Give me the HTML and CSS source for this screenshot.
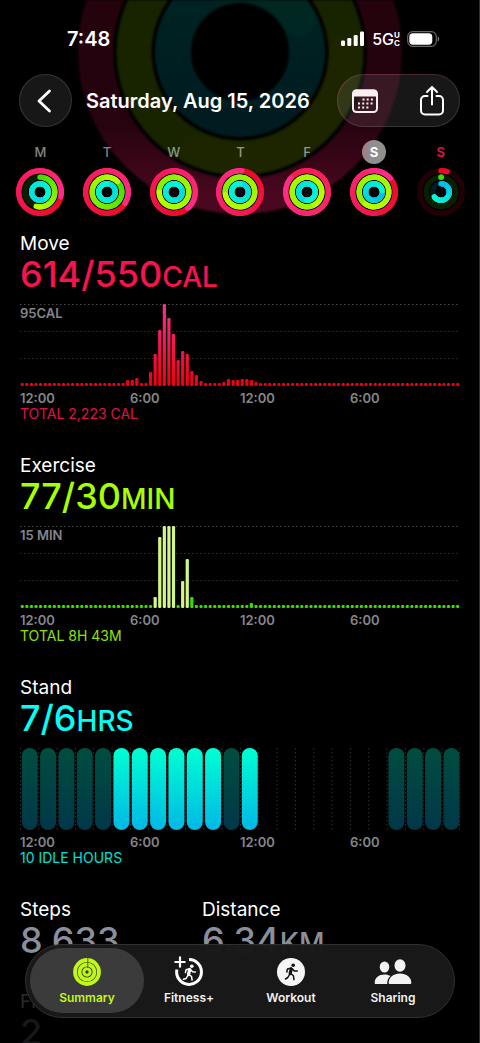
FILE: index.html
```html
<!DOCTYPE html>
<html lang="en">
<head>
<meta charset="utf-8">
<meta name="viewport" content="width=device-width, initial-scale=1">
<title>Activity Summary</title>
<link rel="stylesheet" href="styles.css">
</head>
<body>
<div class="app">
  <svg class="backdrop" width="340" height="224" viewBox="0 0 340 224" aria-hidden="true">
    <defs>
      <linearGradient id="bd-red" x1="0" y1="0" x2="0" y2="1">
        <stop offset="0" stop-color="#24030c"/><stop offset=".75" stop-color="#26030f"/><stop offset="1" stop-color="#4a0820"/>
      </linearGradient>
      <linearGradient id="bd-cyan" x1="0" y1="0" x2="0" y2="1">
        <stop offset="0" stop-color="#002422"/><stop offset="1" stop-color="#001c21"/>
      </linearGradient>
    </defs>
    <g fill="none">
      <circle cx="170" cy="52" r="144.500" stroke="url(#bd-red)" stroke-width="35"/>
      <circle cx="170" cy="52" r="106" stroke="#182300" stroke-width="35"/>
      <path d="M127 149A106 106 0 0 0 276 52" stroke="#1c2500" stroke-width="33" stroke-linecap="round"/>
      <circle cx="170" cy="52" r="67" stroke="url(#bd-cyan)" stroke-width="36"/>
      <path d="M160 -14A67 67 0 0 1 229 19" stroke="#002721" stroke-width="34" stroke-linecap="round"/>
    </g>
  </svg>

  <header class="top">
    <div class="status">
      <time class="clock">7:48</time>
      <div class="signals">
        <svg width="24" height="16" viewBox="0 0 24 16" fill="#fff" aria-label="Signal">
          <rect x="0" y="9.500" width="4" height="5.500" rx="1.200"/><rect x="6.300" y="7" width="4" height="8" rx="1.200"/><rect x="12.700" y="4" width="4" height="11" rx="1.200"/><rect x="19" y="0.500" width="4" height="14.500" rx="1.200"/>
        </svg>
        <span class="carrier">5G<span class="uc"><span>U</span><span>C</span></span></span>
        <svg width="33" height="16" viewBox="0 0 33 16" aria-label="Battery">
          <rect x=".7" y=".7" width="28.600" height="14.600" rx="5" fill="none" stroke="#6b6669" stroke-width="1.200"/>
          <rect x="2.300" y="2.300" width="23" height="11.400" rx="3.600" fill="#fff"/>
          <path d="M30.700 5.500c2 .6 2 4.400 0 5z" fill="#77777a"/>
        </svg>
      </div>
    </div>
    <div class="titlebar">
      <button class="glass back" type="button" aria-label="Back">
        <svg width="26" height="26" viewBox="0 0 26 26" fill="none" stroke="#fff" stroke-width="2.800" stroke-linecap="round" stroke-linejoin="round"><path d="M16.500 3 6 13l10.500 10"/></svg>
      </button>
      <h1 class="title">Saturday, Aug 15, 2026</h1>
      <div class="glass actions">
        <button type="button" aria-label="Calendar">
          <svg width="28" height="28" viewBox="0 0 28 28">
            <rect x="2" y="3.500" width="24" height="21.500" rx="3.500" fill="none" stroke="#fdeef2" stroke-width="2"/>
            <path d="M1.500 9.500V6A3.500 3.500 0 0 1 5 2.500h18A3.500 3.500 0 0 1 26.500 6v3.500z" fill="#fdeef2"/>
            <path d="M11.500 12.500h11M7 16.500h15.500M7 20.500h11" stroke="#fdeef2" stroke-width="2" stroke-dasharray="2 2.200"/>
          </svg>
        </button>
        <button type="button" aria-label="Share">
          <svg width="28" height="32" viewBox="0 0 28 32" fill="none" stroke="#fff" stroke-width="2" stroke-linecap="round" stroke-linejoin="round">
            <path d="M9.500 11H7a4 4 0 0 0-4 4v10.500a4 4 0 0 0 4 4h14a4 4 0 0 0 4-4V15a4 4 0 0 0-4-4h-2.500M14 19.500V2.500M9 7l5-5 5 5"/>
          </svg>
        </button>
      </div>
    </div>
    <div class="week" id="week"></div>
  </header>

  <main class="content">
    <section class="metric move">
      <h2>Move</h2>
      <p class="value">614/550<small>CAL</small></p>
      <div class="chart">
        <span class="scale">95CAL</span>
        <svg class="plot" id="move-plot" width="100%" height="82">
          <defs><linearGradient id="move-fill" gradientUnits="userSpaceOnUse" x1="0" y1="0" x2="0" y2="82"><stop offset="0" stop-color="#ff2f92"/><stop offset=".5" stop-color="#f5164f"/><stop offset="1" stop-color="#ea0010"/></linearGradient></defs>
        </svg>
      </div>
      <div class="axis"><span>12:00</span><span>6:00</span><span>12:00</span><span>6:00</span></div>
      <p class="total">TOTAL 2,223 CAL</p>
    </section>

    <section class="metric exercise">
      <h2>Exercise</h2>
      <p class="value">77/30<small>MIN</small></p>
      <div class="chart">
        <span class="scale">15 MIN</span>
        <svg class="plot" id="exercise-plot" width="100%" height="82"></svg>
      </div>
      <div class="axis"><span>12:00</span><span>6:00</span><span>12:00</span><span>6:00</span></div>
      <p class="total">TOTAL 8H 43M</p>
    </section>

    <section class="metric stand">
      <h2>Stand</h2>
      <p class="value">7/6<small>HRS</small></p>
      <div class="chart">
        <svg class="plot" id="stand-plot" width="100%" height="82">
          <defs>
            <linearGradient id="stand-on" x1="0" y1="0" x2="0" y2="1"><stop offset="0" stop-color="#00ffd2"/><stop offset="1" stop-color="#00b8e6"/></linearGradient>
            <linearGradient id="stand-off" x1="0" y1="0" x2="0" y2="1"><stop offset="0" stop-color="#004d3f"/><stop offset="1" stop-color="#003748"/></linearGradient>
          </defs>
        </svg>
      </div>
      <div class="axis"><span>12:00</span><span>6:00</span><span>12:00</span><span>6:00</span></div>
      <p class="total">10 IDLE HOURS</p>
    </section>

    <section class="stats">
      <div class="metric"><h2>Steps</h2><p class="value">8,633</p></div>
      <div class="metric"><h2>Distance</h2><p class="value">6.34<small>KM</small></p></div>
      <div class="metric"><h2>Flights Climbed</h2><p class="value">2</p></div>
    </section>
  </main>

  <div class="fade"></div>
  <nav class="tabs">
    <button class="tab active" type="button">
      <svg width="28" height="28" viewBox="0 0 28 28" fill="none" stroke="#c1f818" stroke-width="3.800">
        <circle cx="14" cy="14" r="12"/><circle cx="14" cy="14" r="7.500"/><circle cx="14" cy="14" r="3.200" stroke-width="3"/>
        <path d="M14.800 0v10" stroke="#3b3b3b" stroke-width=".8"/>
      </svg>
      <span>Summary</span>
    </button>
    <button class="tab" type="button">
      <svg width="28" height="28" viewBox="2 2 28 28" fill="none" stroke="#fff" stroke-linecap="round" stroke-linejoin="round">
        <path d="M16 3.600A12.400 12.400 0 1 1 3.900 13.500" stroke-width="3" stroke-linecap="butt"/>
        <path d="M7 1.300v9.400M2.300 6h9.400" stroke-width="2.200"/>
        <circle cx="18.800" cy="10.300" r="1.800" fill="#fff" stroke="none"/>
        <path d="M16.800 13.500l-1.300 5" stroke-width="3.200"/>
        <path d="M16.800 12.700l-3.700 1-.7 2.800M17.800 14l1.800 1.800 2.800.2M16.100 18.500l2.400 2 .6 3.500M14.800 19.500l-1.700 3-2.600.8" stroke-width="1.500"/>
      </svg>
      <span>Fitness+</span>
    </button>
    <button class="tab" type="button">
      <svg width="28" height="28" viewBox="0 0 28 28" fill="none" stroke="#111" stroke-linecap="round" stroke-linejoin="round">
        <circle cx="14" cy="14" r="14" fill="#f5f5f5" stroke="none"/>
        <circle cx="16.200" cy="7.300" r="1.800" fill="#111" stroke="none"/>
        <path d="M14.300 11l-1.200 4.500" stroke-width="3.200"/>
        <path d="M14.300 10l-3.800 1-.7 3M15.500 11l1.800 1.900 3 .1M13.800 15.500l2.600 2.200.6 4M12.500 16.500l-1.700 3-2.300 1.500" stroke-width="1.500"/>
      </svg>
      <span>Workout</span>
    </button>
    <button class="tab" type="button">
      <svg width="38" height="26" viewBox="0 0 38 26" fill="#f2f2f2">
        <ellipse cx="10.500" cy="8" rx="4.800" ry="5.600"/><ellipse cx="26" cy="6.500" rx="5.500" ry="6.200"/>
        <path d="M.7 24C.7 18.500 5 15.500 10.500 15.500c2.500 0 4.500.6 6 1.600-2.200 1.900-3.300 4.200-3.300 7.900H1.900C1 25 .7 24.700.7 24z"/>
        <path d="M14.700 23.800c0-5.600 5-9.300 11.300-9.300s11.300 3.700 11.300 9.300c0 .8-.4 1.200-1.200 1.200H15.900c-.8 0-1.200-.4-1.200-1.200z"/>
      </svg>
      <span>Sharing</span>
    </button>
  </nav>
</div>
<script src="app.js"></script>
</body>
</html>
```
FILE: styles.css
```css
* { box-sizing: border-box; }

body {
  margin: 0;
  background: #000;
  color: #fff;
  font-family: Inter, "Liberation Sans", sans-serif;
}

h1, h2, p { margin: 0; }

button {
  padding: 0;
  border: 0;
  background: none;
  color: inherit;
  font: inherit;
}

svg { display: block; flex: none; }

.app {
  position: relative;
  height: 100vh;
  overflow: hidden;
  border-right: 1px solid #303030;
}

.backdrop {
  position: absolute;
  top: 0;
  left: 50%;
  transform: translateX(-50%);
  filter: blur(1px);
}

.top, .content { position: relative; }

.status {
  display: flex;
  justify-content: space-between;
  align-items: center;
  height: 74px;
  padding: 4px 39px 0 67px;
}

.clock { font-size: 20px; font-weight: 600; }

.signals { display: flex; align-items: center; gap: 7px; }

.carrier {
  display: flex;
  align-items: center;
  font-size: 16px;
  font-weight: 500;
}

.uc {
  display: grid;
  font-size: 8px;
  line-height: 8px;
  font-weight: 700;
}

.titlebar {
  display: flex;
  align-items: center;
  gap: 14px;
  padding: 0 19px;
}

.glass {
  height: 53px;
  border: 1px solid rgba(255, 255, 255, .13);
  border-radius: 27px;
  background: rgba(255, 255, 255, .09);
}

.back {
  display: grid;
  place-items: center;
  width: 53px;
}

.title {
  flex: 1;
  font-size: 20px;
  font-weight: 600;
  line-height: 24px;
  white-space: nowrap;
}

.actions {
  display: flex;
  justify-content: space-between;
  align-items: center;
  width: 123px;
  padding: 0 13px;
  border-color: rgba(255, 120, 140, .2) rgba(255, 255, 255, .13) rgba(255, 255, 255, .13) rgba(255, 60, 90, .35);
}

.week {
  display: grid;
  grid-template-columns: repeat(7, 1fr);
  padding: 13px 5px 0 7px;
}

.day {
  display: grid;
  justify-items: center;
  gap: 4px;
}

.day-name {
  width: 24px;
  border-radius: 12px;
  color: rgba(255, 255, 255, .53);
  font-size: 13px;
  font-weight: 500;
  line-height: 24px;
  text-align: center;
}

.day-name.selected {
  background: linear-gradient(100deg, #a37b83, #8f8f8f 45%);
  color: #fff;
  font-weight: 700;
}

.day-name.today { color: #e5124f; font-weight: 600; }

.content { padding: 16px 19px 0 20px; }

.metric h2 {
  font-size: 19px;
  font-weight: 400;
  line-height: 24px;
}

.value {
  font-size: 36px;
  font-weight: 500;
  line-height: 36px;
}

.value small { font-size: 28px; line-height: 0; }

.chart { position: relative; margin-top: 12px; }

.scale {
  position: absolute;
  top: 1px;
  left: 0;
  color: #85858a;
  font-size: 13px;
  font-weight: 600;
  line-height: 16px;
}

.axis {
  display: grid;
  grid-template-columns: repeat(4, 1fr);
  margin-top: 4px;
  color: #85858a;
  font-size: 13px;
  font-weight: 600;
  line-height: 16px;
}

.total {
  margin-bottom: 32px;
  font-size: 14px;
  line-height: 16px;
}

.move .value { color: #fa114f; }
.move .total { color: #e01048; }
.exercise .value { color: #a6ff00; }
.exercise .total { color: #92e000; }
.stand .value { color: #00fff6; }
.stand .total { color: #00e0d4; }

.stats {
  display: grid;
  grid-template-columns: 182px 1fr;
  row-gap: 32px;
}

.stats .value { color: #8b8f99; }

.fade {
  position: absolute;
  right: 0;
  bottom: 0;
  left: 0;
  height: 90px;
  background: linear-gradient(rgba(0, 0, 0, 0), rgba(0, 0, 0, .84) 40%);
}

.tabs {
  position: absolute;
  right: 24px;
  bottom: 25px;
  left: 25px;
  display: flex;
  height: 74px;
  padding: 0 10px;
  border: 1px solid #303030;
  border-radius: 37px;
  background: rgba(24, 24, 24, .98);
}

.tab {
  position: relative;
  display: flex;
  flex: 1;
  flex-direction: column;
  align-items: center;
  justify-content: space-between;
  padding: 13px 0 11px;
  color: #f0f0f0;
  font-size: 12px;
  font-weight: 600;
  line-height: 16px;
}

.tab svg { height: 28px; overflow: visible; }

.tab svg, .tab span { position: relative; }

.tab.active { color: #c1f818; }

.tab.active::before {
  content: "";
  position: absolute;
  inset: 3px -6px 4px;
  border-radius: 33px;
  background: #3b3b3b;
}
```
FILE: app.js
```javascript
const NS = "http://www.w3.org/2000/svg";

function add(parent, tag, attrs) {
  const node = document.createElementNS(NS, tag);
  for (const key in attrs) node.setAttribute(key, attrs[key]);
  parent.appendChild(node);
  return node;
}

function mix(a, b, t) {
  return "rgb(" + a.map((v, i) => Math.round(v + (b[i] - v) * t)).join(",") + ")";
}

/* Ring arc from one angle to another, in degrees clockwise from the top. */
function arc(svg, r, from, to, c0, c1) {
  const steps = Math.max(2, Math.ceil(Math.abs(to - from) / 6));
  const point = (deg) => {
    const a = (deg - 90) * Math.PI / 180;
    return (24 + r * Math.cos(a)).toFixed(2) + " " + (24 + r * Math.sin(a)).toFixed(2);
  };
  for (let i = 0; i < steps; i++) {
    const a = from + (to - from) * i / steps;
    const b = from + (to - from) * (i + 1) / steps;
    add(svg, "path", {
      d: "M" + point(a) + "A" + r + " " + r + " 0 0 1 " + point(b),
      stroke: mix(c0, c1, i / steps), "stroke-width": 5.3,
      "stroke-linecap": "round", fill: "none"
    });
  }
}

const RED = [236, 8, 38], PINK = [255, 45, 135];
const GREEN = [60, 222, 0], LEAF = [125, 240, 0], LIME = [184, 255, 0];
const BLUE = [0, 184, 232], SKY = [0, 215, 220], AQUA = [0, 250, 212];

/* Each arc is [from, to, start colour, end colour]. */
const days = [
  { name: "M", arcs: [[-257, 103, RED, PINK], [0, 195, GREEN, LIME], [-225, 135, SKY, AQUA]] },
  { name: "T", arcs: [[-238, 122, RED, PINK], [-315, 45, GREEN, LIME], [-360, 0, SKY, AQUA]] },
  { name: "W", arcs: [[-220, 140, RED, PINK], [-90, 270, LEAF, LIME], [-315, 45, SKY, AQUA]] },
  { name: "T", arcs: [[-355, 5, RED, PINK], [-100, 260, LEAF, LIME], [-360, 0, SKY, AQUA]] },
  { name: "F", arcs: [[-50, 310, [246, 28, 75], PINK], [-210, 150, [150, 245, 0], LIME], [-180, 180, SKY, AQUA]] },
  { name: "S", state: "selected", arcs: [[-310, 50, RED, PINK], [-145, 215, [140, 240, 0], LIME], [-280, 80, BLUE, AQUA]] },
  { name: "S", state: "today", arcs: [[0, 17, RED, RED], [0, 1, GREEN, GREEN], [0, 235, BLUE, AQUA]] }
];
const radii = [21.3, 14.8, 8.3];
const tracks = ["#220006", "#081f00", "#001820"];

const week = document.getElementById("week");
days.forEach((day) => {
  const cell = document.createElement("div");
  cell.className = "day";
  const name = document.createElement("span");
  name.className = "day-name " + (day.state || "");
  name.textContent = day.name;
  cell.appendChild(name);
  const svg = add(cell, "svg", { width: 48, height: 48, viewBox: "0 0 48 48" });
  if (day.state !== "today") add(svg, "circle", { cx: 24, cy: 24, r: 19, fill: "#000", "fill-opacity": 0.75 });
  day.arcs.forEach((a, i) => {
    add(svg, "circle", { cx: 24, cy: 24, r: radii[i], fill: "none", stroke: tracks[i], "stroke-width": 5.3 });
    arc(svg, radii[i], ...a);
  });
  week.appendChild(cell);
});

function gridLines(svg) {
  [[0.5, "#4a4a4a"], [27.5, "#2c2c2c"], [54.5, "#2c2c2c"]].forEach(([y, stroke]) =>
    add(svg, "line", { x1: 0, x2: "100%", y1: y, y2: y, stroke, "stroke-dasharray": "1.500 2.500" }));
}

function bars(svg, values, fill) {
  gridLines(svg);
  for (let i = 0; i < 96; i++) {
    const h = values[i] || 3;
    add(svg, "rect", { x: (i / 96 * 100 + 0.15) + "%", y: 82 - h, width: 3.2, height: h, rx: 1.2, fill: fill(i, h) });
  }
}

bars(document.getElementById("move-plot"), {
  23: 6, 24: 6, 25: 8, 28: 14, 29: 32, 30: 56, 31: 82, 32: 68, 33: 52, 34: 26, 35: 35, 36: 32,
  37: 15, 38: 11, 39: 5, 44: 4, 45: 7, 46: 6, 47: 6, 48: 7, 49: 7, 50: 6, 51: 4
}, () => "url(#move-fill)");

bars(document.getElementById("exercise-plot"), {
  29: 11, 30: 71, 31: 82, 32: 82, 33: 82, 35: 27, 36: 49, 37: 11, 50: 5
}, (i, h) => (h > 10 && i !== 37 ? "#d3f688" : "#3ddc00"));

const stand = document.getElementById("stand-plot");
const hours = "-----++++++-+       ----";
for (let i = 0; i <= 24; i++) {
  const x = (i / 24 * 100 - (i === 24 ? 0.1 : -0.1)) + "%";
  add(stand, "line", { x1: x, x2: x, y1: 0, y2: 82, stroke: "#333", "stroke-dasharray": "1.500 2.500" });
}
[...hours].forEach((state, i) => {
  if (state === " ") return;
  add(stand, "rect", {
    x: (i / 24 * 100 + 0.4) + "%", y: 0, width: 16, height: 82, rx: 8,
    fill: state === "+" ? "url(#stand-on)" : "url(#stand-off)"
  });
});
```
